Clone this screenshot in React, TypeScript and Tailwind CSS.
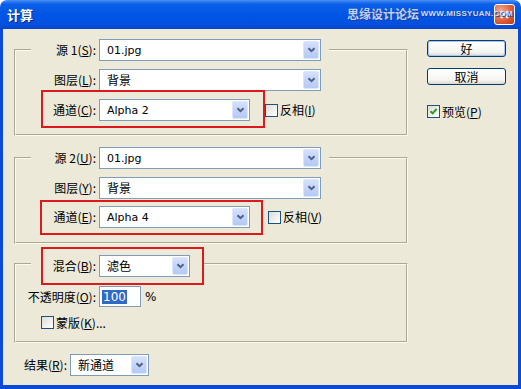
import type { ReactNode } from "react";

const cjk = "font-['Noto_Sans_CJK_SC',sans-serif]";
const latin = "font-['DejaVu_Sans','Noto_Sans_CJK_SC',sans-serif] text-[11px]";

function Chevron() {
  return (
    <svg width="9" height="6" viewBox="0 0 9 6" className="block">
      <path d="M1.5 1.2 L4.5 4.2 L7.5 1.2" fill="none" stroke="#4d6185" strokeWidth="2" />
    </svg>
  );
}

function Select({ value, className, textClass }: { value: string; className: string; textClass?: string }) {
  return (
    <div className={`flex h-[22px] shrink-0 items-center border border-[#7f9db9] bg-white p-px ${className}`}>
      <span className={`flex-1 pl-[6px] leading-none text-black ${textClass ?? latin}`}>{value}</span>
      <span className="flex h-full w-[16px] items-center justify-center rounded-[2px] border border-[#dce6fc] bg-[linear-gradient(to_bottom,#d4e0fd,#b4c9f5)]">
        <Chevron />
      </span>
    </div>
  );
}

function Label({ children, className }: { children: ReactNode; className?: string }) {
  return (
    <span className={`shrink-0 whitespace-nowrap text-right text-[12px] leading-none text-black ${cjk} ${className ?? ""}`}>
      {children}
    </span>
  );
}

function Check({ checked }: { checked?: boolean }) {
  return (
    <span className="flex h-[13px] w-[13px] shrink-0 items-center justify-center border border-[#1c5180] bg-[linear-gradient(135deg,#dcdcd7,#ffffff)]">
      {checked && (
        <svg width="9" height="9" viewBox="0 0 9 9">
          <path d="M1.5 4.2 L3.6 6.4 L7.6 2" fill="none" stroke="#21a121" strokeWidth="2" />
        </svg>
      )}
    </span>
  );
}

function Btn({ children, focused }: { children: ReactNode; focused?: boolean }) {
  return (
    <div
      className={`flex h-[17px] w-[79px] items-center justify-center rounded-[3px] border border-[#003c74] bg-[linear-gradient(to_bottom,#ffffff,#f4f4f0_75%,#dcd7cb)] text-[12px] leading-none text-black ${cjk} ${
        focused ? "shadow-[inset_0_0_0_1px_#a9c6f3]" : ""
      }`}
    >
      {children}
    </div>
  );
}

const group = "border-2 [border-style:groove] border-[#fffbe6] px-0";
const red = "border-2 border-[#dc1a1e]";

export default function App() {
  return (
    <div className="flex h-[389px] w-[521px] flex-col bg-white select-none">
      {/* title bar */}
      <div className="relative flex h-[29px] shrink-0 items-center rounded-t-[7px] bg-[linear-gradient(to_bottom,#4a8ff4_0%,#0b5fe8_14%,#0055e5_50%,#0450df_85%,#0a44c8_100%)] pl-[7px] pr-[6px]">
        <span className={`text-[13px] font-bold text-white [text-shadow:1px_1px_0_#0f2a8c] ${cjk}`}>计算</span>
        <div className="ml-auto flex h-[21px] w-[21px] items-center justify-center rounded-[3px] border border-white bg-[radial-gradient(circle_at_30%_30%,#f3a78f,#dc5a34_60%,#b93c18)]">
          <svg width="11" height="11" viewBox="0 0 11 11">
            <path d="M2 2 L9 9 M9 2 L2 9" stroke="white" strokeWidth="2" />
          </svg>
        </div>
        {/* watermark stamp over the title bar */}
        <div className="absolute left-[347px] top-[6px] flex w-[166px] items-center justify-between">
          <span className={`text-[12px] font-bold leading-[16px] text-[#bcd2ff] [text-shadow:0_0_1px_#1b3f9e,1px_1px_0_#1b3f9e] ${cjk}`}>
            思缘设计论坛
          </span>
          <span className="font-['Liberation_Sans',sans-serif] text-[8px] font-bold leading-none tracking-[0.3px] text-[#c9dbff] [text-shadow:1px_1px_0_#1b3f9e]">
            WWW.MISSYUAN.COM
          </span>
        </div>
      </div>

      {/* body */}
      <div className="flex flex-1 border-x-[3px] border-b-[4px] border-[#0b49d8] bg-[#ece9d8]">
        <div className="ml-[11px] flex w-[394px] flex-col">
          {/* group 1 */}
          <fieldset className={`mt-[10px] pb-[13px] ${group}`}>
            <legend className="ml-[15px] p-0">
              <div className="flex items-center pr-[8px]">
                <Label className="w-[65px]">
                  源 1(<u>S</u>):
                </Label>
                <Select value="01.jpg" className="ml-[3px] w-[222px]" />
              </div>
            </legend>
            <div className="mt-[8px] flex items-center">
              <Label className="w-[80px]">
                图层(<u>L</u>):
              </Label>
              <Select value="背景" className="ml-[3px] w-[222px]" textClass={`text-[12px] ${cjk}`} />
            </div>
            <div className="mt-[8px] flex h-[22px] items-center">
              <div className={`-mb-[7px] -mt-[9px] ml-[25px] flex items-center pb-[5px] pr-[13px] pt-[7px] ${red}`}>
                <Label className="w-[53px]">
                  通道(<u>C</u>):
                </Label>
                <Select value="Alpha 2" className="ml-[3px] w-[151px]" />
              </div>
              <Check />
              <Label className="ml-[2px]">
                反相(<u>I</u>)
              </Label>
            </div>
          </fieldset>

          {/* group 2 */}
          <fieldset className={`mt-[11px] pb-[14px] ${group}`}>
            <legend className="ml-[15px] p-0">
              <div className="flex items-center pr-[8px]">
                <Label className="w-[65px]">
                  源 2(<u>U</u>):
                </Label>
                <Select value="01.jpg" className="ml-[3px] w-[222px]" />
              </div>
            </legend>
            <div className="mt-[8px] flex items-center">
              <Label className="w-[80px]">
                图层(<u>Y</u>):
              </Label>
              <Select value="背景" className="ml-[3px] w-[222px]" textClass={`text-[12px] ${cjk}`} />
            </div>
            <div className="mt-[7px] flex h-[22px] items-center">
              <div className={`-mb-[7px] -mt-[6px] ml-[24px] flex items-center pb-[5px] pr-[11px] pt-[4px] ${red}`}>
                <Label className="w-[54px]">
                  通道(<u>E</u>):
                </Label>
                <Select value="Alpha 4" className="ml-[3px] w-[151px]" />
              </div>
              <span className="ml-[5px]">
                <Check />
              </span>
              <Label className="ml-[2px]">
                反相(<u>V</u>)
              </Label>
            </div>
          </fieldset>

          {/* group 3 */}
          <fieldset className={`mt-[6px] pb-[12px] ${group}`}>
            <legend className="ml-[15px] p-0">
              <div className="flex items-center pt-[5px]">
                <div className={`-mb-[8px] -mt-[8px] ml-[10px] flex items-center pb-[6px] pr-[12px] pt-[6px] ${red}`}>
                  <Label className="w-[53px]">
                    混合(<u>B</u>):
                  </Label>
                  <Select value="滤色" className="ml-[3px] w-[91px]" textClass={`text-[12px] ${cjk}`} />
                </div>
              </div>
            </legend>
            <div className="mt-[9px] flex items-center">
              <Label className="w-[80px]">
                不透明度(<u>O</u>):
              </Label>
              <div className="ml-[3px] flex h-[21px] w-[42px] items-center border border-[#7f9db9] bg-white pl-[2px]">
                <span className="bg-[#316ac5] px-px font-['DejaVu_Sans',sans-serif] text-[12px] leading-[14px] text-white">100</span>
              </div>
              <span className="ml-[4px] font-['DejaVu_Sans',sans-serif] text-[12px] leading-none text-black">%</span>
            </div>
            <div className="mt-[9px] flex items-center">
              <span className="ml-[25px]">
                <Check />
              </span>
              <Label className="ml-[2px]">
                蒙版(<u>K</u>)...
              </Label>
            </div>
          </fieldset>

          {/* result */}
          <div className="mt-[11px] flex items-center">
            <Label className="ml-[3px] w-[50px]">
              结果(<u>R</u>):
            </Label>
            <Select value="新通道" className="ml-[3px] w-[79px]" textClass={`text-[12px] ${cjk}`} />
          </div>
        </div>

        {/* buttons */}
        <div className="ml-[19px] flex flex-col">
          <div className="mt-[11px]">
            <Btn focused>好</Btn>
          </div>
          <div className="mt-[11px]">
            <Btn>取消</Btn>
          </div>
          <div className="mt-[20px] flex items-center">
            <Check checked />
            <Label className="ml-[2px]">
              预览(<u>P</u>)
            </Label>
          </div>
        </div>
      </div>
    </div>
  );
}
